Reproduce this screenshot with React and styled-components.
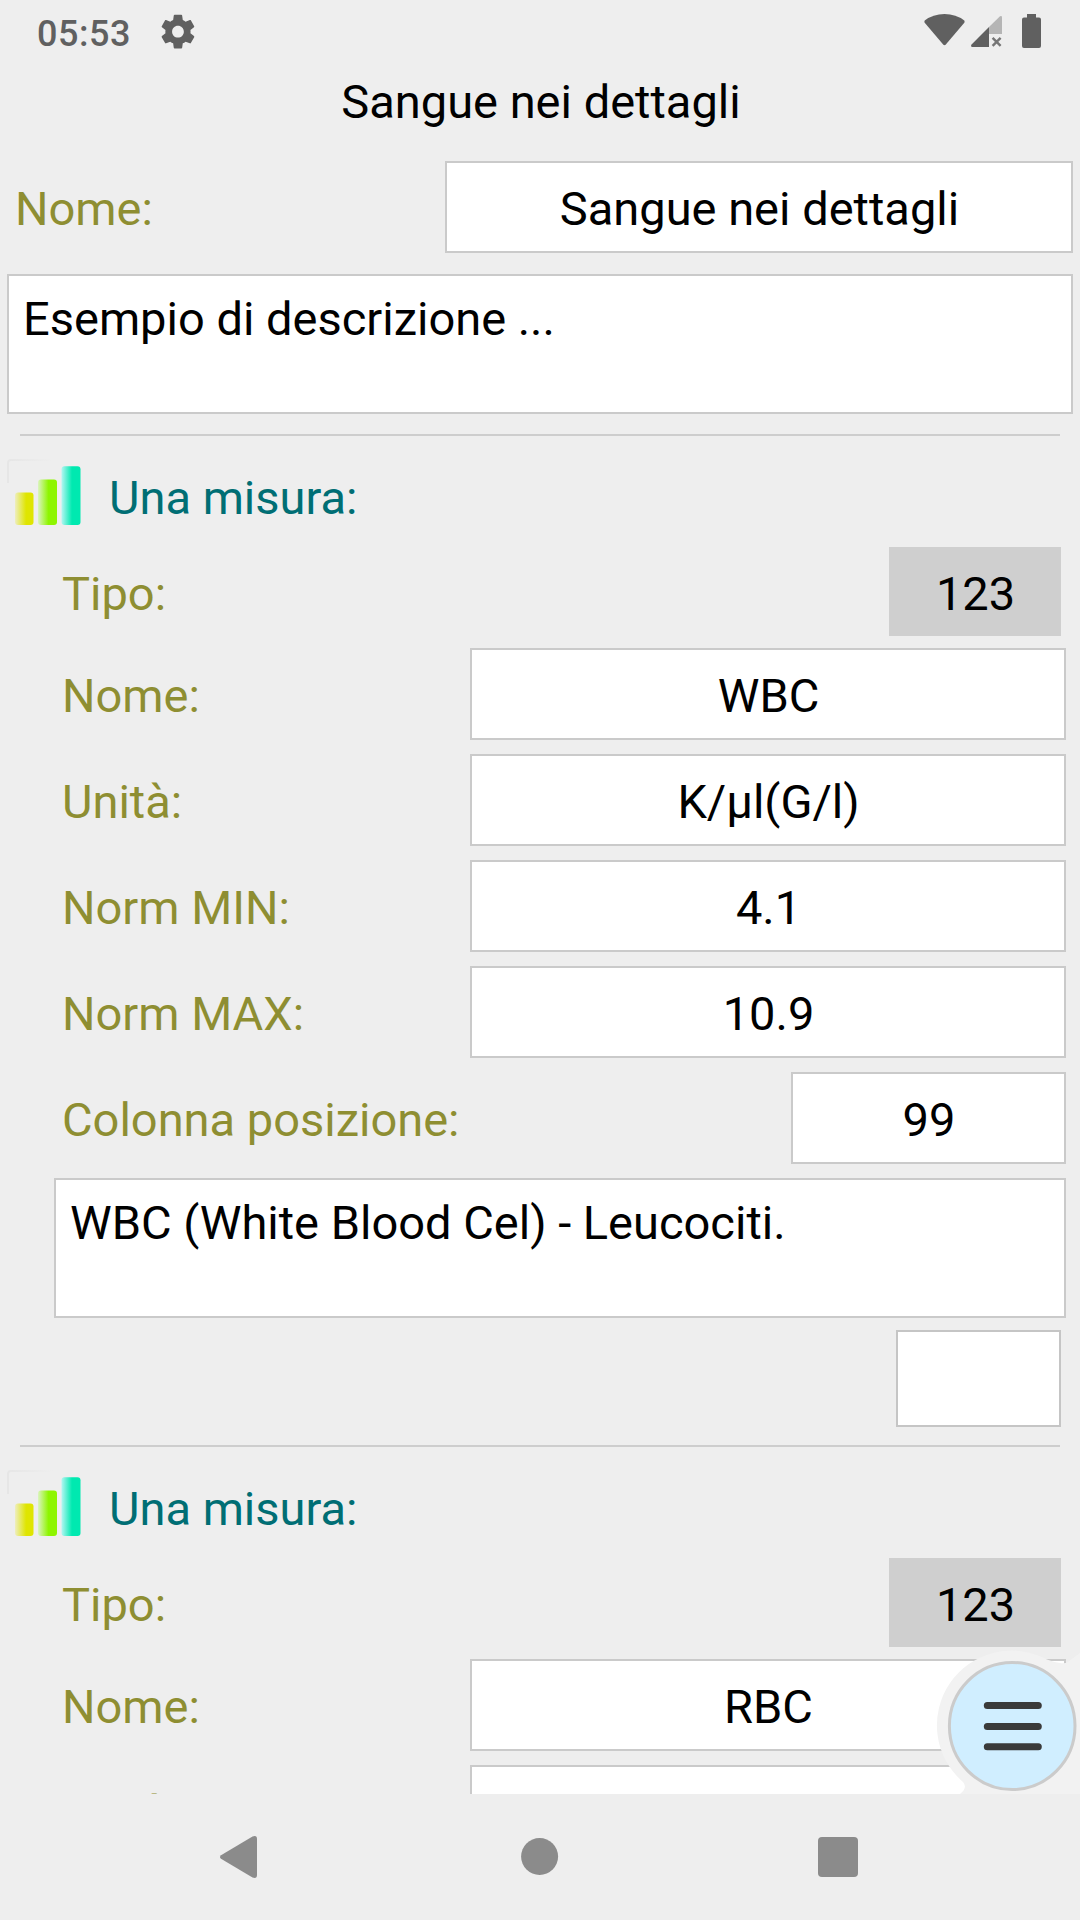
import React from 'react';
import styled, { createGlobalStyle } from 'styled-components';

const GlobalStyle = createGlobalStyle`
	* {
		box-sizing: border-box;
	}

	body {
		margin: 0;
		background: #eeeeee;
	}
`;

const Screen = styled.div`
	display: flex;
	flex-direction: column;
	width: 1080px;
	height: 1920px;
	overflow: hidden;
	background: #eeeeee;
	font-family: Roboto, sans-serif;
	font-size: 47px;
	line-height: 56px;
	color: #000000;
`;

const StatusBar = styled.header`
	display: flex;
	flex: none;
	justify-content: space-between;
	height: 63px;
	padding: 0 37px;
	color: #606060;

	.left {
		display: flex;
	}

	.time {
		width: 120px;
		padding-top: 3px;
		font-size: 36px;
		font-weight: 500;
		line-height: 63px;
		letter-spacing: 0.5px;
	}

	svg {
		display: block;
	}
`;

const Content = styled.main`
	position: relative;
	flex: none;
	height: 1731px;
	overflow: hidden;
`;

const Title = styled.h1`
	height: 98px;
	margin: 0;
	padding: 11px 0 0 2px;
	font-size: inherit;
	font-weight: 400;
	text-align: center;
`;

const Row = styled.div`
	display: flex;
	justify-content: space-between;
	align-items: center;
	padding-left: ${props => props.$indent}px;
	padding-right: ${props => props.$right}px;
	margin-bottom: ${props => props.$gap}px;
`;

const Label = styled.label`
	padding-top: 4px;
	color: #8e8e32;
	white-space: nowrap;
`;

const Field = styled.div`
	width: ${props => props.$width}px;
	height: 92px;
	padding: 18px 0 0 1px;
	border: 2px solid #cacaca;
	background: #ffffff;
	text-align: center;
	white-space: nowrap;
`;

const TextArea = styled.div`
	height: 140px;
	margin: 0 ${props => props.$right}px 0 ${props => props.$left}px;
	padding: 15px 14px;
	border: 2px solid #cacaca;
	background: #ffffff;
`;

const Description = styled(TextArea)`
	margin-bottom: 20px;
`;

const TypeButton = styled.button`
	width: 172px;
	height: 89px;
	padding: 4px 0 0 1px;
	border: none;
	background: #cfcfcf;
	color: inherit;
	font: inherit;
`;

const EmptyBox = styled.div`
	width: 165px;
	height: 97px;
	margin: 12px 19px 18px auto;
	border: 2px solid #c5c5c5;
	background: #ffffff;
`;

const Divider = styled.hr`
	height: 2px;
	margin: 0 20px;
	border: none;
	background: #cdcdcd;
`;

const MeasureHead = styled.div`
	display: flex;
	height: 111px;
	padding: 23px 0 0 7px;

	span {
		margin-left: 24px;
		padding-top: 11px;
		color: #006e74;
	}
`;

const MenuButton = styled.div`
	position: absolute;
	right: 0;
	bottom: 0;
	width: 145px;
	height: 145px;

	svg {
		display: block;
	}
`;

const NavBar = styled.nav`
	display: flex;
	flex: 1;
	justify-content: space-between;
	align-items: flex-start;
	padding: 39px 218px 0 217px;

	svg {
		display: block;
	}
`;

const measures = [
	{ name: 'WBC', unit: 'K/µl(G/l)', min: '4.1', max: '10.9', column: '99', text: 'WBC (White Blood Cel) - Leucociti.' },
	// only the first rows of this one fit above the nav bar
	{ name: 'RBC', unit: 'M/µl' },
];


function BarsIcon() {
	return (
		<svg width='78' height='70' viewBox='0 0 78 70'>
			<defs>
				<linearGradient id='yellow'>
					<stop offset='0' stopColor='#eeeebe' />
					<stop offset='0.6' stopColor='#dfe500' />
				</linearGradient>
				<linearGradient id='green'>
					<stop offset='0' stopColor='#dcf4c0' />
					<stop offset='0.55' stopColor='#8ef500' />
				</linearGradient>
				<linearGradient id='cyan'>
					<stop offset='0' stopColor='#b4f6f2' />
					<stop offset='0.55' stopColor='#00e9b0' />
				</linearGradient>
				<linearGradient id='edge'>
					<stop offset='0' stopColor='#e6e6e6' />
					<stop offset='1' stopColor='#eeeeee' />
				</linearGradient>
			</defs>
			<path d='M1 24V4q0-3 3-3h42' fill='none' stroke='url(#edge)' strokeWidth='2' />
			<rect x='8' y='33.5' width='18.5' height='32.5' rx='3' fill='url(#yellow)' />
			<rect x='31' y='20.5' width='19' height='45.5' rx='3' fill='url(#green)' />
			<rect x='54.5' y='7.3' width='19' height='58.7' rx='3' fill='url(#cyan)' />
		</svg>
	);
}

function GearIcon() {
	return (
		<svg width='41' height='63' viewBox='0 0 41 63' fill='currentColor'>
			<path
				transform='translate(.8 11.5) scale(1.68)'
				d='M19.43 12.98c.04-.32.07-.64.07-.98s-.03-.66-.07-.98l2.11-1.65c.19-.15.24-.42.12-.64l-2-3.46c-.12-.22-.39-.3-.61-.22l-2.49 1c-.52-.4-1.08-.73-1.69-.98l-.38-2.65C14.46 2.18 14.25 2 14 2h-4c-.25 0-.46.18-.49.42l-.38 2.65c-.61.25-1.17.59-1.69.98l-2.49-1c-.23-.09-.49 0-.61.22l-2 3.46c-.13.22-.07.49.12.64l2.11 1.65c-.04.32-.07.65-.07.98s.03.66.07.98l-2.11 1.65c-.19.15-.24.42-.12.64l2 3.46c.12.22.39.3.61.22l2.49-1c.52.4 1.08.73 1.69.98l.38 2.65c.03.24.24.42.49.42h4c.25 0 .46-.18.49-.42l.38-2.65c.61-.25 1.17-.59 1.69-.98l2.49 1c.23.09.49 0 .61-.22l2-3.46c.12-.22.07-.49-.12-.64l-2.11-1.65zM12 15.5c-1.93 0-3.5-1.57-3.5-3.5s1.57-3.5 3.5-3.5 3.5 1.57 3.5 3.5-1.57 3.5-3.5 3.5z'
			/>
		</svg>
	);
}

function StatusIcons() {
	return (
		<svg width='120' height='63' viewBox='923 0 120 63' fill='currentColor'>
			<path d='M924.7 20.5Q933 14 944.5 14T964.3 20.5Q965 21.7 964.3 22.8L945.6 44.7Q944.5 45.6 943.4 44.7L924.7 22.8Q924 21.7 924.7 20.5Z' />
			<path d='M1002 34H989V27L1000 16.3Q1002 15.5 1002 17.5Z' opacity='0.4' />
			<path d='M989 27V47H972Q970.3 46.5 971.3 44.7Z' />
			<path d='M992.6 37.8L1000.6 45.8M1000.6 37.8L992.6 45.8' stroke='currentColor' strokeWidth='2.4' opacity='0.85' />
			<path d='M1027 14h9v3.500h3q2 0 2 2V46q0 2-2 2h-15q-2 0-2-2V19.500q0-2 2-2h3z' />
		</svg>
	);
}

function Measure(props) {
	const { name, unit, min, max, column, text } = props.measure;

	return (
		<section>
			<Divider />
			<MeasureHead>
				<BarsIcon />
				<span>Una misura:</span>
			</MeasureHead>
			<Row $indent={62} $right={19} $gap={12}>
				<Label>Tipo:</Label>
				<TypeButton>123</TypeButton>
			</Row>
			<Row $indent={62} $right={14} $gap={14}>
				<Label>Nome:</Label>
				<Field $width={596}>{name}</Field>
			</Row>
			<Row $indent={62} $right={14} $gap={14}>
				<Label>Unità:</Label>
				<Field $width={596}>{unit}</Field>
			</Row>
			{text && (
				<>
					<Row $indent={62} $right={14} $gap={14}>
						<Label>Norm MIN:</Label>
						<Field $width={596}>{min}</Field>
					</Row>
					<Row $indent={62} $right={14} $gap={14}>
						<Label>Norm MAX:</Label>
						<Field $width={596}>{max}</Field>
					</Row>
					<Row $indent={62} $right={14} $gap={14}>
						<Label>Colonna posizione:</Label>
						<Field $width={275}>{column}</Field>
					</Row>
					<TextArea $left={54} $right={14}>{text}</TextArea>
					<EmptyBox />
				</>
			)}
		</section>
	);
}

function App() {
	return (
		<Screen>
			<GlobalStyle />
			<StatusBar>
				<div className='left'>
					<div className='time'>05:53</div>
					<GearIcon />
				</div>
				<StatusIcons />
			</StatusBar>
			<Content>
				<Title>Sangue nei dettagli</Title>
				<Row $indent={15} $right={7} $gap={21}>
					<Label>Nome:</Label>
					<Field $width={628}>Sangue nei dettagli</Field>
				</Row>
				<Description $left={7} $right={7}>Esempio di descrizione ...</Description>
				{measures.map(measure => <Measure key={measure.name} measure={measure} />)}
				<MenuButton>
					<svg width='145' height='145' viewBox='935 1649 145 145'>
						<path
							d='M1080 1653L1068 1662Q1065 1664 1060 1663Q1053 1662 1047 1659.5A74.7 74.7 0 0 0 963 1782Q968 1788 960 1794H1080Z'
							fill='#f2f2f2'
						/>
						<ellipse cx='1012.2' cy='1726' rx='62.8' ry='63.5' fill='#d0eeff' stroke='#cbcbcb' strokeWidth='3' />
						<path d='M987.3 1705.6H1038.3M987.3 1726.6H1038.3M987.3 1746.7H1038.3' stroke='#3a3a3a' strokeWidth='7' strokeLinecap='round' />
					</svg>
				</MenuButton>
			</Content>
			<NavBar>
				<svg width='46' height='48' viewBox='217 1833 46 48' fill='#8b8b8b'>
					<path d='M221 1855.2L252.5 1836.5Q257 1834.8 257 1839V1875Q257 1879 252.5 1877.5L221 1858.8Q219 1857 221 1855.2Z' />
				</svg>
				<svg width='46' height='48' viewBox='517 1833 46 48' fill='#8b8b8b'>
					<circle cx='539.6' cy='1856.5' r='18.5' />
				</svg>
				<svg width='46' height='48' viewBox='816 1833 46 48' fill='#8b8b8b'>
					<rect x='818' y='1837' width='40' height='40' rx='4' />
				</svg>
			</NavBar>
		</Screen>
	);
}

export default App;
